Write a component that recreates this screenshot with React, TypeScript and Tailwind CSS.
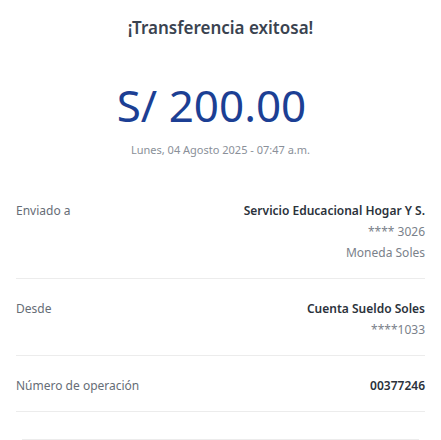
const FONT = { fontFamily: '"Noto Sans", "Open Sans", Arial, sans-serif' };

type Row = { label: string; lines: string[] };

const ROWS: Row[] = [
  {
    label: 'Enviado a',
    lines: ['Servicio Educacional Hogar Y S.', '**** 3026', 'Moneda Soles'],
  },
  { label: 'Desde', lines: ['Cuenta Sueldo Soles', '****1033'] },
  { label: 'Número de operación', lines: ['00377246'] },
];

function DetailRow({ row }: { row: Row }) {
  return (
    <div className="flex items-start justify-between border-b border-[#ececec] pt-[19px] pb-[15px] leading-[21px]">
      <span className="text-[12px] text-[#666d76]">{row.label}</span>
      <div className="flex flex-col items-end text-[12px]">
        {row.lines.map((line, i) => (
          <span
            key={line}
            className={i === 0 ? 'font-semibold text-[#2b323b]' : 'text-[#7a818a]'}
          >
            {line}
          </span>
        ))}
      </div>
    </div>
  );
}

export default function App() {
  return (
    <div className="min-h-[440px] w-[441px] bg-white px-4" style={FONT}>
      <h1 className="pt-4 text-center text-[17px] leading-6 font-semibold text-[#3a4350]">
        ¡Transferencia exitosa!
      </h1>
      <p className="mt-[39px] pr-[18px] text-center text-[44px] leading-[52px] text-[#1c3f94]">
        S/ 200.00
      </p>
      <p className="mt-3 text-center text-[11px] leading-[14px] text-[#8a9099]">
        Lunes, 04 Agosto 2025 - 07:47 a.m.
      </p>
      <div className="mt-6">
        {ROWS.map((row) => (
          <DetailRow key={row.label} row={row} />
        ))}
      </div>
      <div className="mx-[6px] mt-[27px] border-t border-[#ececec]" />
    </div>
  );
}
